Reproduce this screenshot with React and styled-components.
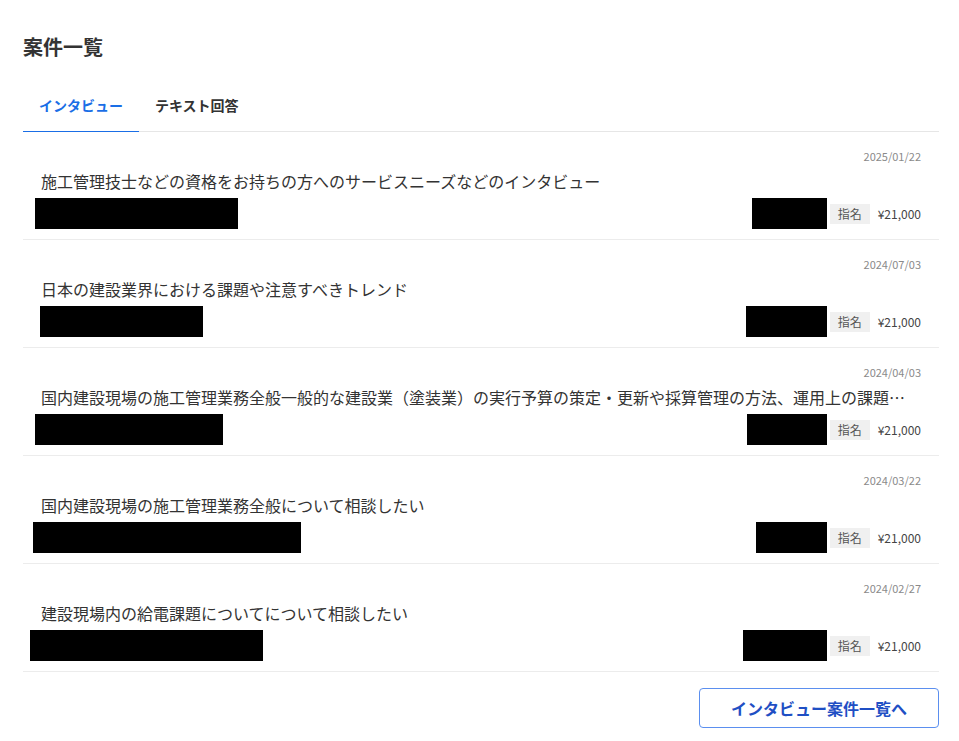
import styled, { createGlobalStyle } from "styled-components";

const GlobalStyle = createGlobalStyle`
  body {
    margin: 0;
    background: #ffffff;
    font-family: "Noto Sans CJK JP", "Noto Sans", sans-serif;
    color: #333333;
  }
`;

const items = [
  {
    date: "2025/01/22",
    title: "施工管理技士などの資格をお持ちの方へのサービスニーズなどのインタビュー",
    left: { offset: -6, width: 203 },
    right: { width: 75 },
  },
  {
    date: "2024/07/03",
    title: "日本の建設業界における課題や注意すべきトレンド",
    left: { offset: -1, width: 163 },
    right: { width: 81 },
  },
  {
    date: "2024/04/03",
    title:
      "国内建設現場の施工管理業務全般一般的な建設業（塗装業）の実行予算の策定・更新や採算管理の方法、運用上の課題について",
    left: { offset: -6, width: 188 },
    right: { width: 80 },
  },
  {
    date: "2024/03/22",
    title: "国内建設現場の施工管理業務全般について相談したい",
    left: { offset: -8, width: 268 },
    right: { width: 71 },
  },
  {
    date: "2024/02/27",
    title: "建設現場内の給電課題についてについて相談したい",
    left: { offset: -11, width: 233 },
    right: { width: 84 },
  },
];

export default function App() {
  return (
    <>
      <GlobalStyle />
      <Page>
        <Heading>案件一覧</Heading>
        <Tabs>
          <Tab $active>インタビュー</Tab>
          <Tab>テキスト回答</Tab>
        </Tabs>
        <List>
          {items.map((item) => (
            <Item key={item.date}>
              <DateText>{item.date}</DateText>
              <Title>{item.title}</Title>
              <Bottom>
                <Redacted $offset={item.left.offset} $width={item.left.width} />
                <Meta>
                  <Redacted $width={item.right.width} />
                  <Badge>指名</Badge>
                  <Price>¥21,000</Price>
                </Meta>
              </Bottom>
            </Item>
          ))}
        </List>
        <Footer>
          <MoreButton>インタビュー案件一覧へ</MoreButton>
        </Footer>
      </Page>
    </>
  );
}

const Page = styled.div`
  padding: 33px 20px 0 23px;
`;

const Heading = styled.h1`
  margin: 0;
  font-size: 20px;
  line-height: 28px;
  font-weight: 700;
  color: #333333;
`;

const Tabs = styled.div`
  display: flex;
  margin-top: 19px;
  border-bottom: 1px solid #e6e6e6;
`;

const Tab = styled.div`
  padding: 15px 16px 16px;
  font-size: 14px;
  line-height: 20px;
  font-weight: 700;
  color: ${(p) => (p.$active ? "#1a6ee6" : "#333333")};
  border-bottom: 1px solid ${(p) => (p.$active ? "#1a6ee6" : "transparent")};
  margin-bottom: -1px;
`;

const List = styled.div`
  display: flex;
  flex-direction: column;
`;

const Item = styled.div`
  padding: 16px 18px 10px;
  border-bottom: 1px solid #ececec;
`;

const DateText = styled.div`
  text-align: right;
  font-size: 11px;
  line-height: 16px;
  color: #8a8a8a;
`;

const Title = styled.div`
  margin-top: 5px;
  font-size: 16px;
  line-height: 24px;
  color: #333333;
  white-space: nowrap;
  overflow: hidden;
  text-overflow: ellipsis;
`;

const Bottom = styled.div`
  margin-top: 5px;
  height: 31px;
  display: flex;
  align-items: center;
  justify-content: space-between;
`;

const Redacted = styled.div`
  width: ${(p) => p.$width}px;
  height: 31px;
  margin-left: ${(p) => p.$offset || 0}px;
  background: #000000;
`;

const Meta = styled.div`
  display: flex;
  align-items: center;
`;

const Badge = styled.span`
  margin-left: 3px;
  padding: 0 8px;
  height: 20px;
  line-height: 20px;
  font-size: 12px;
  color: #555555;
  background: #f0f0f0;
`;

const Price = styled.span`
  margin-left: 8px;
  font-size: 12px;
  color: #444444;
`;

const Footer = styled.div`
  display: flex;
  justify-content: flex-end;
  margin-top: 16px;
`;

const MoreButton = styled.button`
  width: 240px;
  height: 40px;
  border: 1px solid #5b8fef;
  border-radius: 4px;
  background: #ffffff;
  font-family: "Noto Sans CJK JP", "Noto Sans", sans-serif;
  font-size: 16px;
  font-weight: 700;
  color: #1f4fc4;
  cursor: pointer;
`;
